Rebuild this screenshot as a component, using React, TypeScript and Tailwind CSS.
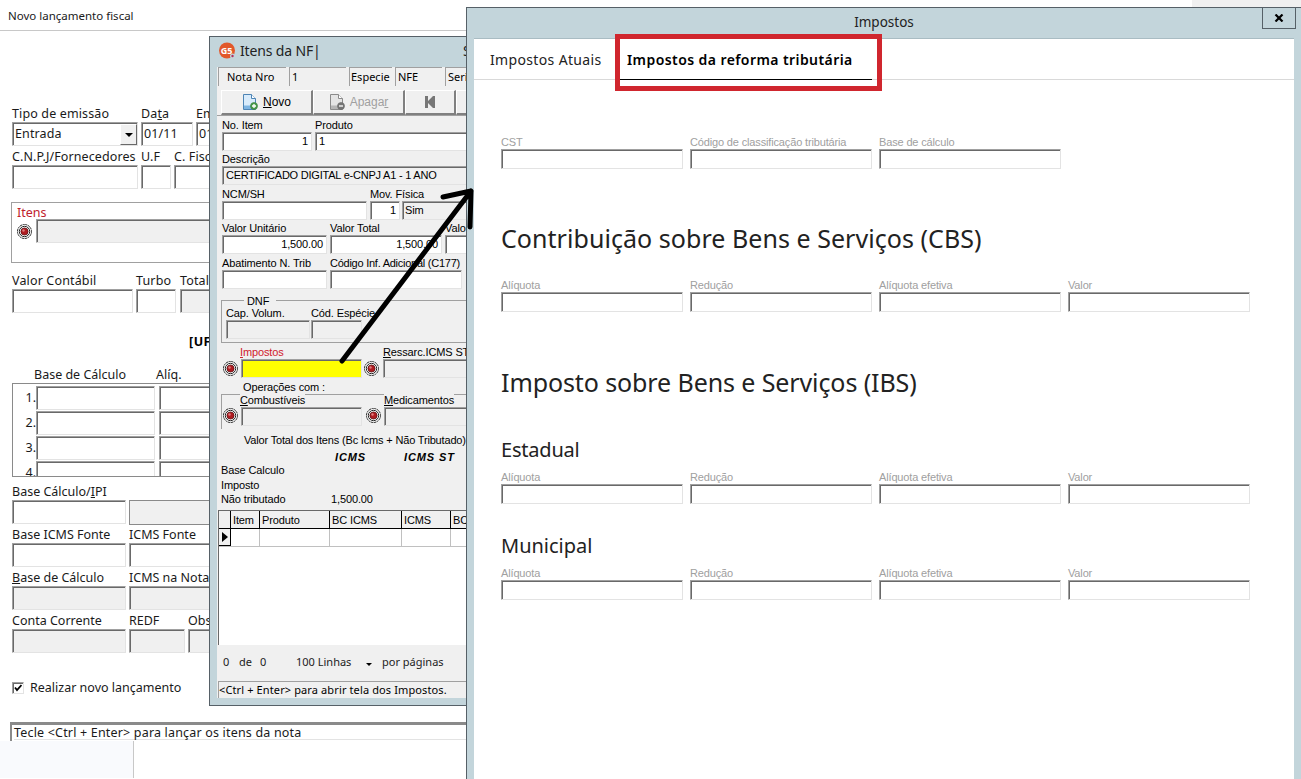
import type { ReactNode } from 'react'

const ui = "font-['Noto_Sans','Open_Sans',sans-serif]"
const classic = "font-['Liberation_Sans',Arial,sans-serif]"
const sunken =
  'shrink-0 border border-t-[#a0a0a0] border-l-[#a0a0a0] border-r-[#e3e3e3] border-b-[#e3e3e3] shadow-[inset_1px_1px_0_#696969]'

type FieldProps = {
  label: ReactNode
  className: string
  fill?: string
  children?: ReactNode
}

/* Field of the background form */
function Field({ label, className, fill = 'bg-white', children }: FieldProps) {
  return (
    <div className={`shrink-0 ${className}`}>
      <div className="h-4 whitespace-nowrap text-[12.5px] leading-4">{label}</div>
      <div className={`flex h-6 items-center pl-[2px] whitespace-nowrap ${sunken} ${fill}`}>{children}</div>
    </div>
  )
}

/* Compact field used by the items dialog */
function SmallField({ label, className, fill = 'bg-white', children }: FieldProps) {
  return (
    <div className={`shrink-0 ${className}`}>
      <div className="h-3 whitespace-nowrap leading-[11px]">{label}</div>
      <div className={`flex h-[19px] items-center px-[3px] whitespace-nowrap ${sunken} ${fill}`}>{children}</div>
    </div>
  )
}

function TaxField({ label }: { label: string }) {
  return (
    <div className="w-[182px]">
      <div className="h-[14px] text-[11px] leading-[14px] tracking-[-0.15px] whitespace-nowrap text-[#a0a0a0]">{label}</div>
      <div className={`h-5 bg-white ${sunken}`} />
    </div>
  )
}

function TaxRow({ labels, className }: { labels: string[]; className: string }) {
  return (
    <div className={`flex gap-[7px] ${classic} ${className}`}>
      {labels.map((l) => (
        <TaxField key={l} label={l} />
      ))}
    </div>
  )
}

function Target() {
  return (
    <svg className="h-[15px] w-[15px] shrink-0" viewBox="0 0 15 15">
      <circle cx="7.5" cy="7.5" r="7" fill="#fff" stroke="#222" strokeDasharray="2.2 .6" />
      <circle cx="7.5" cy="7.5" r="5.2" fill="#fff" stroke="#222" strokeWidth="1" />
      <circle cx="7.5" cy="7.5" r="3.6" fill="#b01c22" stroke="#4a0a0c" strokeWidth=".7" />
      <circle cx="6.5" cy="6.5" r="1.2" fill="#e08080" />
    </svg>
  )
}

function DocIcon({ muted }: { muted?: boolean }) {
  return (
    <svg className="h-4 w-4 shrink-0" viewBox="0 0 16 16">
      <path
        d="M1.5 .5h8l4 4v11h-12z"
        fill={muted ? '#e4e4e4' : '#d8ebfb'}
        stroke={muted ? '#8a8a8a' : '#4d84b5'}
      />
      <path d="M9.5 .5v4h4" fill="#fff" stroke={muted ? '#8a8a8a' : '#4d84b5'} />
      <path d="M2 11.500h11v3.500h-11z" fill={muted ? '#b5b5b5' : '#7db4e2'} />
      <circle cx="12" cy="12" r="3.5" fill={muted ? '#777' : '#4c9c4c'} stroke={muted ? '#666' : '#2f7a36'} strokeWidth=".6" />
      <path d={muted ? 'M10 12h4' : 'M10 12h4M12 10v4'} stroke="#fff" strokeWidth="1.3" />
    </svg>
  )
}

function BackForm() {
  return (
    <div className={`h-[779px] w-full bg-white text-[12.5px] text-[#1a1a1a] ${ui}`}>
      <div className="flex h-[31px] border-b border-[#c8c8c8]">
        <div className="flex-1 pl-2 text-[11.5px] leading-[31px]">Novo lançamento fiscal</div>
        <div className="h-[7px] w-[109px] bg-[#f0f0f0]" />
      </div>

      <div className="pl-3">
        <div className="flex gap-[3px] pt-[75px] tracking-[0.13px]">
          <Field label="Tipo de emissão" className="w-[126px]">
            <span className="flex-1">Entrada</span>
            <span className="mt-px flex h-[21px] w-[17px] items-center justify-center border border-t-white border-l-white border-r-[#696969] border-b-[#696969] bg-[#f0f0f0]">
              <span className="border-x-4 border-t-4 border-x-transparent border-t-black" />
            </span>
          </Field>
          <Field label={<>Da<u>t</u>a</>} className="w-[52px]">01/11</Field>
          <Field label="Emissão" className="w-[52px]">01/11</Field>
        </div>
        <div className="mt-[3px] flex gap-[3px] tracking-[0.1px]">
          <Field label="C.N.P.J/Fornecedores" className="w-[126px]" />
          <Field label="U.F" className="w-[30px]" />
          <Field label="C. Fiscal" className="w-[60px]" />
        </div>

        <div className="mt-[13px] -ml-px h-[61px] w-[300px] border border-[#a0a0a0] pl-[5px]">
          <div className="h-4 pt-[2px] leading-4 text-[#c0202c]">Itens</div>
          <div className="flex items-center gap-1">
            <Target />
            <div className={`h-6 w-[240px] bg-[#f0f0f0] ${sunken}`} />
          </div>
        </div>

        <div className="mt-[10px] flex gap-[3px] tracking-[0.15px]">
          <Field label="Valor Contábil" className="w-[121px]" />
          <Field label="Turbo" className="mr-px w-[40px]" />
          <Field label="Total" className="w-[60px]" fill="bg-[#f0f0f0]" />
        </div>

        <div className="mt-[21px] h-4 pl-[177px] leading-4 font-bold tracking-[0.5px] text-black">[UF]</div>

        <div className="mt-[17px] flex h-4 pl-[22px] leading-4">
          <span className="w-[122px]">Base de Cálculo</span>
          <span>Alíq.</span>
        </div>
        <div className="h-[94px] w-[240px] overflow-hidden border border-[#8a8a8a] pt-[2px]">
          {[1, 2, 3, 4].map((n) => (
            <div key={n} className="mb-px flex h-6">
              <span className="w-[23px] shrink-0 pt-[2px] text-right leading-5">{n}.</span>
              <div className={`mr-1 h-6 w-[119px] ${sunken}`} />
              <div className={`h-6 w-[119px] ${sunken}`} />
            </div>
          ))}
        </div>

        <div className="mt-[7px] flex gap-[3px]">
          <Field label={<>Base Cálculo/<u>I</u>PI</>} className="w-[114px]" />
          <div className="mt-4 h-[25px] w-[120px] border border-[#8a8a8a] bg-[#f0f0f0]" />
        </div>
        <div className="mt-[2px] flex gap-[3px]">
          <Field label="Base ICMS Fonte" className="w-[114px]" />
          <Field label="ICMS Fonte" className="w-[120px]" />
        </div>
        <div className="mt-[3px] flex gap-[3px]">
          <Field label={<><u>B</u>ase de Cálculo</>} className="w-[114px]" fill="bg-[#f0f0f0]" />
          <Field label="ICMS na Nota" className="w-[120px]" fill="bg-[#f0f0f0]" />
        </div>
        <div className="mt-[3px] flex gap-[3px]">
          <Field label="Conta Corrente" className="w-[114px]" fill="bg-[#f0f0f0]" />
          <Field label="REDF" className="w-[56px]" fill="bg-[#f0f0f0]" />
          <Field label="Obs" className="w-[60px]" fill="bg-[#f0f0f0]" />
        </div>

        <div className="mt-[27px] flex h-4 items-center gap-[6px]">
          <span className={`flex h-3 w-3 items-center justify-center bg-white ${sunken}`}>
            <svg className="h-2 w-2" viewBox="0 0 8 8">
              <path d="M1 3.500l2 2.500 4.500-5" fill="none" stroke="#000" strokeWidth="1.8" />
            </svg>
          </span>
          <span className="pt-px">Realizar novo lançamento</span>
        </div>
      </div>

      <div className="mt-[26px] ml-[10px] h-[19px] w-[500px] border-t-[3px] border-l-2 border-t-[#8a8a8a] border-l-[#8a8a8a] pl-[2px]">
        <div className="h-[15px] border-b border-[#e3e3e3] leading-4 tracking-[0.18px]">Tecle &lt;Ctrl + Enter&gt; para lançar os itens da nota</div>
      </div>
      <div className="h-[37px] w-[134px] border-r border-[#c8c8c8] bg-[#f9fafd]" />
    </div>
  )
}

function InfoCell({ children, className }: { children: ReactNode; className: string }) {
  return (
    <div className={`h-[19px] shrink-0 overflow-hidden border-t border-l border-[#a0a0a0] leading-[18px] whitespace-nowrap ${className}`}>
      {children}
    </div>
  )
}

function ToolButton({ children, className }: { children?: ReactNode; className: string }) {
  return (
    <div className={`flex h-[25px] shrink-0 items-center justify-center gap-[5px] border-t border-l border-t-white border-l-white border-r-2 border-b-2 border-r-[#808080] border-b-[#808080] ${className}`}>
      {children}
    </div>
  )
}

const gridColumns = [
  { title: 'Item', className: 'w-[29px]' },
  { title: 'Produto', className: 'w-[70px]' },
  { title: 'BC ICMS', className: 'w-[72px]' },
  { title: 'ICMS', className: 'w-[49px]' },
  { title: 'BC', className: 'w-[49px]' },
]

function ItemsWindow() {
  return (
    <div className="absolute top-9 left-[209px] h-[670px] w-[300px] overflow-hidden border border-[#566067] bg-[#c3d5db] pl-[7px] text-black">
      <div className={`flex h-[30px] items-center pb-[2px] text-sm tracking-[-0.15px] text-[#222] ${ui}`}>
        <svg className="mr-1 ml-px h-[18px] w-[18px]" viewBox="0 0 18 18">
          <circle cx="9" cy="8.500" r="8" fill="#e2582a" />
          <circle cx="14.500" cy="14" r="2.500" fill="#c3d5db" />
          <circle cx="14.500" cy="14" r="1.200" fill="#b03060" />
          <text x="8.500" y="12" fontSize="9" fontWeight="bold" fill="#fff" textAnchor="middle">G5</text>
        </svg>
        <span className="w-[223px]">Itens da NF|</span>
        <span>S</span>
      </div>

      <div className={`h-[631px] bg-[#f0f0f0] text-[11px] tracking-[-0.12px] ${classic}`}>
        <div className={`flex h-5 gap-[3px] pl-px tracking-normal ${ui}`}>
          <InfoCell className="w-[68px] pl-[8px]">Nota Nro</InfoCell>
          <InfoCell className="w-[57px] pl-[2px]">1</InfoCell>
          <InfoCell className="w-[43px] pl-px">Especie</InfoCell>
          <InfoCell className="w-[47px] pl-[2px]">NFE</InfoCell>
          <InfoCell className="w-[50px] pl-[2px]">Serie</InfoCell>
        </div>
        <div className="mt-[2px] flex h-[27px] border-b border-[#a0a0a0] pt-px pl-1 tracking-normal">
          <ToolButton className="w-[92px]">
            <DocIcon />
            <span className="text-xs"><u>N</u>ovo</span>
          </ToolButton>
          <ToolButton className="w-[92px] text-[#a0a0a0]">
            <DocIcon muted />
            <span className="text-xs">Apaga<u>r</u></span>
          </ToolButton>
          <ToolButton className="w-[51px]">
            <svg className="h-3 w-3" viewBox="0 0 12 12" fill="#777">
              <path d="M1 0h3v5l5-5h2v12h-2l-5-5v5h-3z" />
            </svg>
          </ToolButton>
          <ToolButton className="w-[51px]" />
        </div>

        <div className="pt-1 pl-[5px]">
          <div className="flex gap-[3px]">
            <SmallField label="No. Item" className="w-[90px]"><span className="w-full text-right">1</span></SmallField>
            <SmallField label="Produto" className="w-[180px]">1</SmallField>
          </div>
          <SmallField label="Descrição" className="mt-[3px] w-[280px]" fill="bg-[#f0f0f0]">
            <span className="tracking-[-0.22px]">CERTIFICADO DIGITAL e-CNPJ A1 - 1 ANO</span>
          </SmallField>
          <div className="mt-1 flex gap-[3px]">
            <SmallField label="NCM/SH" className="w-[145px]" />
            <SmallField label="Mov. Física" className="w-[30px]"><span className="w-full text-right">1</span></SmallField>
            <div className="-ml-px pt-3">
              <div className={`flex h-[19px] w-[80px] items-center bg-[#f0f0f0] px-[2px] ${sunken}`}>Sim</div>
            </div>
          </div>
          <div className="mt-[3px] flex gap-[3px]">
            <SmallField label="Valor Unitário" className="w-[105px]"><span className="w-full text-right">1,500.00</span></SmallField>
            <SmallField label="Valor Total" className="w-[112px]"><span className="w-full text-right">1,500.00</span></SmallField>
            <SmallField label="Valor" className="w-[60px]" />
          </div>
          <div className="mt-1 flex gap-[3px]">
            <SmallField label="Abatimento N. Trib" className="w-[105px]" />
            <SmallField label={<span className="tracking-[-0.25px]">Código Inf. Adicional (C177)</span>} className="w-[132px]" />
          </div>

          <div className="mt-[11px] -ml-px h-[43px] w-[280px] border border-[#a0a0a0] pl-1">
            <div className="-mt-[6px] ml-[18px] h-3 w-8 bg-[#f0f0f0] px-[3px] leading-3">DNF</div>
            <div className="mt-px flex gap-px">
              <SmallField label="Cap. Volum." className="w-[84px]" fill="bg-[#f0f0f0]" />
              <SmallField label="Cód. Espécie" className="w-[51px]" fill="bg-[#f0f0f0]" />
            </div>
          </div>

          <div className="mt-[4px] flex">
            <div className="w-[19px] pt-[14px] pl-px"><Target /></div>
            <SmallField label={<span className="-ml-px text-[#d0202c]"><u>I</u>mpostos</span>} className="w-[121px]" fill="bg-[#ffff00]" />
            <div className="ml-[2px] w-[19px] pt-[14px]"><Target /></div>
            <SmallField label={<><u>R</u>essarc.ICMS ST</>} className="w-[121px]" fill="bg-[#f0f0f0]" />
          </div>
          <div className="mt-[2px] ml-[21px] h-[14px] leading-[14px]">Operações com :</div>

          <div className="-ml-px flex h-[35px] w-[300px] border-t border-l border-[#a0a0a0]">
            <div className="w-[19px] pt-[13px] pl-px"><Target /></div>
            <SmallField label={<span className="-ml-px bg-[#f0f0f0]"><u>C</u>ombustíveis</span>} className="w-[121px]" fill="bg-[#f0f0f0]" />
            <div className="ml-1 w-[18px] pt-[13px]"><Target /></div>
            <SmallField label={<span className="bg-[#f0f0f0]"><u>M</u>edicamentos</span>} className="w-[121px]" fill="bg-[#f0f0f0]" />
          </div>

          <div className="mt-1 ml-[22px] h-[14px] leading-[14px] tracking-[-0.17px] whitespace-nowrap">Valor Total dos Itens (Bc Icms + Não Tributado)</div>
          <div className="mt-[3px] flex h-[15px] pl-[113px] leading-[15px] font-bold tracking-[0.9px] italic">
            <span className="w-[69px]">ICMS</span>
            <span>ICMS ST</span>
          </div>
          <div className="-mt-[2px] -ml-px leading-[14.5px]">
            <p>Base Calculo</p>
            <p>Imposto</p>
            <p className="flex"><span className="w-[110px]">Não tributado</span>1,500.00</p>
          </div>
        </div>

        <div className="mt-[3px] ml-px h-[135px] border-t border-l border-[#696969] bg-white">
          <div className="flex h-[18px] border-b border-black bg-[#f0f0f0]">
            <div className="w-[12px] border-r border-black" />
            {gridColumns.map((c) => (
              <div key={c.title} className={`shrink-0 border-r border-black pl-[2px] leading-[18px] ${c.className}`}>{c.title}</div>
            ))}
          </div>
          <div className="flex h-[18px] border-b border-[#c0c0c0]">
            <div className="flex w-[12px] items-center justify-center border-r border-b border-black bg-[#f0f0f0]">
              <span className="border-y-[5px] border-l-[6px] border-y-transparent border-l-black" />
            </div>
            {gridColumns.map((c) => (
              <div key={c.title} className={`shrink-0 border-r border-[#c0c0c0] ${c.className}`} />
            ))}
          </div>
        </div>
        <div className={`flex h-[36px] items-center pl-[6px] tracking-normal text-[#222] ${ui}`}>
          <span className="w-4">0</span>
          <span className="w-[21px]">de</span>
          <span className="w-9">0</span>
          <span className="w-[70px] pb-px">100 Linhas</span>
          <span className="mt-1 mr-[10px] border-x-[3px] border-t-[3px] border-x-transparent border-t-black" />
          <span>por páginas</span>
        </div>
        <div className={`ml-px h-[17px] border-t border-l border-[#a0a0a0] leading-4 tracking-[0.12px] ${ui}`}>
          &lt;Ctrl + Enter&gt; para abrir tela dos Impostos.
        </div>
      </div>
    </div>
  )
}

const aliquotas = ['Alíquota', 'Redução', 'Alíquota efetiva', 'Valor']

function TaxWindow() {
  return (
    <div className={`absolute top-[7px] left-[466px] h-[772px] w-[835px] border-t border-l border-[#566067] bg-[#c3d5db] pr-[7px] pl-[7px] text-[#222] ${ui}`}>
      <div className="relative flex h-[30px] items-center justify-center text-[13.5px]">
        <span className="-mt-px">Impostos</span>
        <div className="absolute top-0 -right-[2px] flex h-[21px] w-[34px] items-center justify-center border border-t-0 border-[#566067]">
          <svg className="h-2 w-[10px]" viewBox="0 0 10 8">
            <path d="M1.500 .5l7 7M8.500 .5l-7 7" stroke="#000" strokeWidth="2.200" />
          </svg>
        </div>
      </div>
      <div className="h-[741px] border-t border-[#a9bcc3] bg-white">
        <div className="flex h-[41px] border-b border-[#d9d9d9] pl-4 text-sm leading-[42px]">
          <span className="w-[130px] tracking-[0.35px]">Impostos Atuais</span>
          <span className="h-[41px] w-[252px] border-b border-black pl-[7px] font-semibold tracking-[0.42px] text-black">Impostos da reforma tributária</span>
        </div>
        <div className="pl-[27px]">
          <TaxRow className="mt-[55px]" labels={['CST', 'Código de classificação tributária', 'Base de cálculo']} />
          <h2 className="mt-[49px] h-10 text-[25px] leading-10 tracking-[0.05px]">Contribuição sobre Bens e Serviços (CBS)</h2>
          <TaxRow className="mt-[20px]" labels={aliquotas} />
          <h2 className="mt-[50px] h-10 text-[25px] leading-10 tracking-[-0.1px]">Imposto sobre Bens e Serviços (IBS)</h2>
          <h3 className="mt-[33px] h-[30px] text-[20px] leading-[30px] tracking-[-0.2px]">Estadual</h3>
          <TaxRow className="mt-[5px]" labels={aliquotas} />
          <h3 className="mt-[27px] h-[30px] text-[20px] leading-[30px]">Municipal</h3>
          <TaxRow className="mt-[5px]" labels={aliquotas} />
        </div>
      </div>
    </div>
  )
}

export default function App() {
  return (
    <div className="relative h-[779px] w-[1301px] overflow-hidden">
      <BackForm />
      <ItemsWindow />
      <TaxWindow />
      {/* Annotations */}
      <div className="absolute top-[34px] left-[615px] h-[57px] w-[267px] border-[5px] border-[#d0262e]" />
      <svg className="absolute top-[180px] left-[330px] h-[190px] w-[150px]" viewBox="330 180 150 190">
        <path d="M342 361L471 191M443 197L471 191L470 227" fill="none" stroke="#000" strokeWidth="5" strokeLinecap="round" strokeLinejoin="round" />
      </svg>
    </div>
  )
}
